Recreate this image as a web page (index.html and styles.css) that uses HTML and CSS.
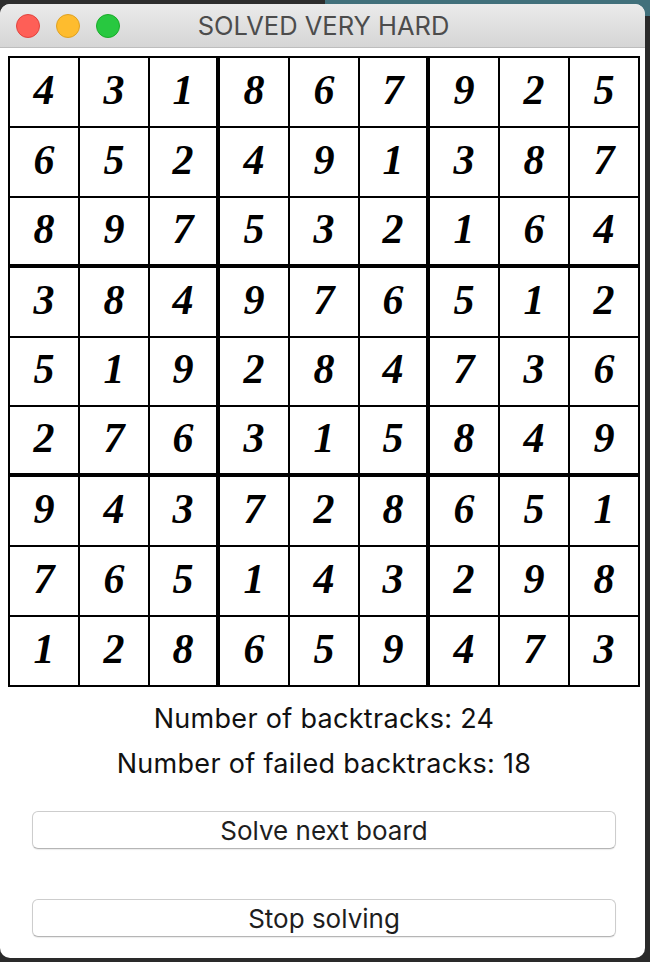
FILE: index.html
```html
<!DOCTYPE html>
<html lang="en">
<head>
<meta charset="utf-8">
<title>SOLVED VERY HARD</title>
<link rel="stylesheet" href="styles.css">
</head>
<body>
	<div id="window">
		<div class="titlebar">
			<div class="lights">
				<span class="light close"></span>
				<span class="light minimize"></span>
				<span class="light zoom"></span>
			</div>
			<div class="title">SOLVED VERY HARD</div>
		</div>
		<div class="content">
			<div class="board">
				<div class="cell">4</div><div class="cell">3</div><div class="cell">1</div><div class="cell">8</div><div class="cell">6</div><div class="cell">7</div><div class="cell">9</div><div class="cell">2</div><div class="cell">5</div>
				<div class="cell">6</div><div class="cell">5</div><div class="cell">2</div><div class="cell">4</div><div class="cell">9</div><div class="cell">1</div><div class="cell">3</div><div class="cell">8</div><div class="cell">7</div>
				<div class="cell">8</div><div class="cell">9</div><div class="cell">7</div><div class="cell">5</div><div class="cell">3</div><div class="cell">2</div><div class="cell">1</div><div class="cell">6</div><div class="cell">4</div>
				<div class="cell">3</div><div class="cell">8</div><div class="cell">4</div><div class="cell">9</div><div class="cell">7</div><div class="cell">6</div><div class="cell">5</div><div class="cell">1</div><div class="cell">2</div>
				<div class="cell">5</div><div class="cell">1</div><div class="cell">9</div><div class="cell">2</div><div class="cell">8</div><div class="cell">4</div><div class="cell">7</div><div class="cell">3</div><div class="cell">6</div>
				<div class="cell">2</div><div class="cell">7</div><div class="cell">6</div><div class="cell">3</div><div class="cell">1</div><div class="cell">5</div><div class="cell">8</div><div class="cell">4</div><div class="cell">9</div>
				<div class="cell">9</div><div class="cell">4</div><div class="cell">3</div><div class="cell">7</div><div class="cell">2</div><div class="cell">8</div><div class="cell">6</div><div class="cell">5</div><div class="cell">1</div>
				<div class="cell">7</div><div class="cell">6</div><div class="cell">5</div><div class="cell">1</div><div class="cell">4</div><div class="cell">3</div><div class="cell">2</div><div class="cell">9</div><div class="cell">8</div>
				<div class="cell">1</div><div class="cell">2</div><div class="cell">8</div><div class="cell">6</div><div class="cell">5</div><div class="cell">9</div><div class="cell">4</div><div class="cell">7</div><div class="cell">3</div>
			</div>
			<div class="stats">
				<div class="stat">Number of backtracks: 24</div>
				<div class="stat">Number of failed backtracks: 18</div>
			</div>
			<button class="solve">Solve next board</button>
			<button class="stop">Stop solving</button>
		</div>
	</div>
</body>
</html>
```

FILE: styles.css
```css
html, body {
	margin: 0;
	height: 100%;
}

body {
	background: linear-gradient(to right, #2d2d2d 325px, #41707b 325px) top / 100% 16px no-repeat, #2a2a2a;
	font-family: Inter, "DejaVu Sans", sans-serif;
	overflow: hidden;
}

#window {
	margin-top: 4px;
	width: 645px;
	height: 954px;
	background: #fff;
	border-radius: 10px;
	overflow: hidden;
}

.titlebar {
	position: relative;
	height: 43px;
	border-bottom: 1px solid #bdbdbd;
	background: linear-gradient(#ebebeb, #d5d5d5);
	display: flex;
	align-items: center;
	justify-content: center;
}

.lights {
	position: absolute;
	left: 16px;
	top: 10px;
	display: flex;
	gap: 16px;
}

.light {
	width: 22px;
	height: 22px;
	border-radius: 50%;
	border: 1px solid;
}
.close {background: #fe5f57; border-color: #e0443e;}
.minimize {background: #febc2e; border-color: #dea123;}
.zoom {background: #28c840; border-color: #1aab29;}

.title {
	font-size: 25.5px;
	color: #4c4c4c;
	margin-left: 2px;
}

.content {
	padding: 8px 5px 0 8px;
}

.board {
	width: 632px;
	height: 631px;
	box-sizing: border-box;
	border: 1px solid #000;
	display: grid;
	grid-template-columns: repeat(9, 1fr);
	grid-template-rows: repeat(9, 1fr);
}

.cell {
	border: 1px solid #000;
	display: flex;
	align-items: center;
	justify-content: center;
	font-family: "Liberation Serif", serif;
	font-weight: bold;
	font-style: italic;
	font-size: 42px;
	padding-bottom: 4px;
}
.cell:nth-child(9n+3), .cell:nth-child(9n+6) {border-right-width: 3px;}
.cell:nth-child(n+19):nth-child(-n+27), .cell:nth-child(n+46):nth-child(-n+54) {border-bottom-width: 3px;}

.stats {
	margin-top: 9px;
	text-align: center;
	font-size: 27px;
	letter-spacing: 0.3px;
	color: #111;
}

.stat {
	line-height: 45px;
}

button {
	display: block;
	width: 584px;
	height: 38px;
	margin: 0 24px;
	border: 1px solid #cdcdcd;
	border-bottom-color: #b5b5b5;
	border-radius: 6px;
	background: #fff;
	box-shadow: 0 1px 1px rgba(0, 0, 0, 0.08);
	font-family: Inter, "DejaVu Sans", sans-serif;
	font-size: 26px;
	color: #1e1e1e;
	padding: 0;
}

.solve {margin-top: 25px;}
.stop {margin-top: 50px;}
```
